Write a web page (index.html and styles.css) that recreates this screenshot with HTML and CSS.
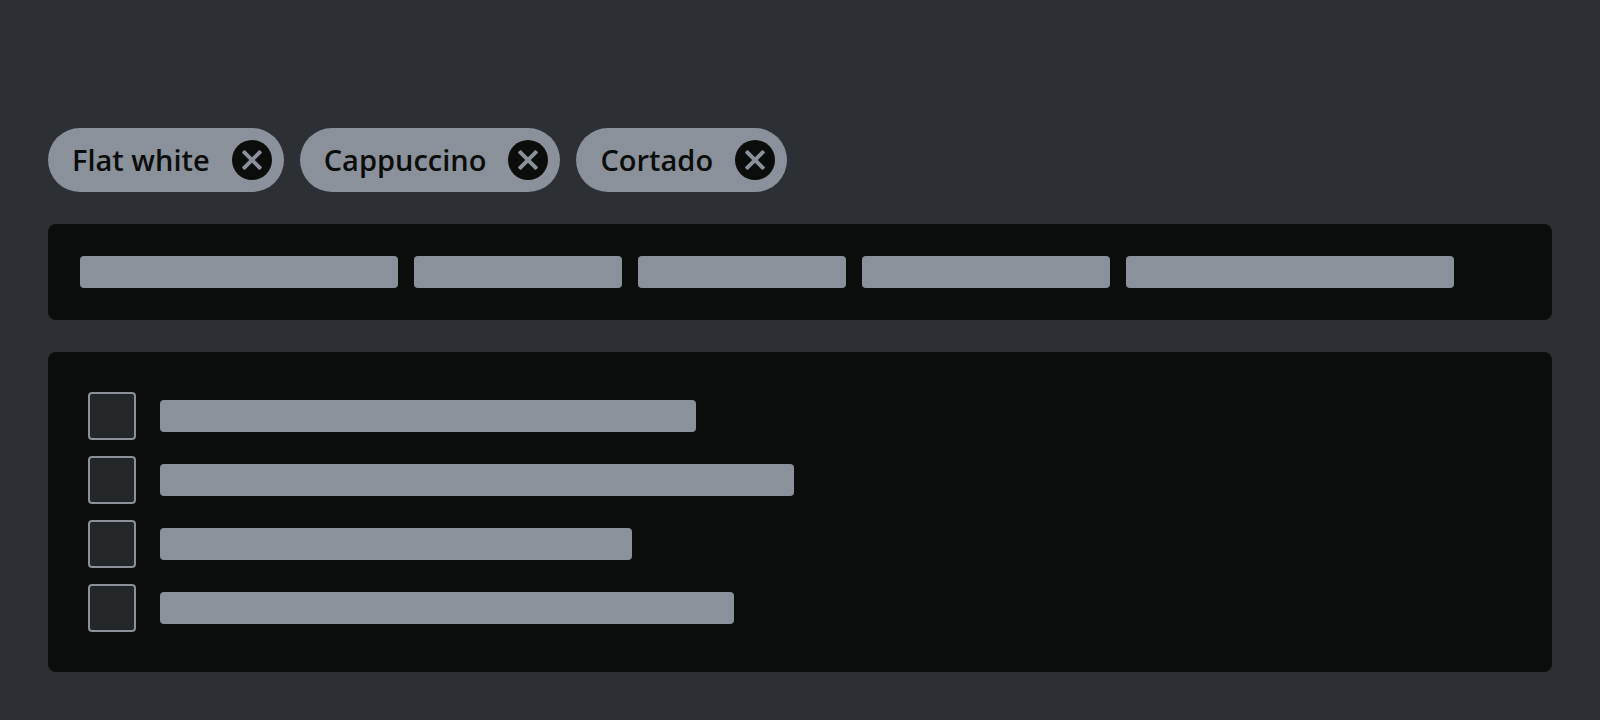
FILE: index.html
```html
<!DOCTYPE html>
<html lang="en">
<head>
<meta charset="utf-8">
<title>Selected filters</title>
<link rel="stylesheet" href="styles.css">
</head>
<body>
<main class="page">
  <ul class="chips">
    <li class="chip"><span class="chip-label">Flat white</span><button class="chip-remove" type="button" aria-label="Remove Flat white"><svg class="chip-icon" viewBox="-10 -10 20 20" aria-hidden="true"><rect x="-12.5" y="-2" width="25" height="4" rx="1" transform="rotate(45)"/><rect x="-12.5" y="-2" width="25" height="4" rx="1" transform="rotate(-45)"/></svg></button></li>
    <li class="chip"><span class="chip-label">Cappuccino</span><button class="chip-remove" type="button" aria-label="Remove Cappuccino"><svg class="chip-icon" viewBox="-10 -10 20 20" aria-hidden="true"><rect x="-12.5" y="-2" width="25" height="4" rx="1" transform="rotate(45)"/><rect x="-12.5" y="-2" width="25" height="4" rx="1" transform="rotate(-45)"/></svg></button></li>
    <li class="chip"><span class="chip-label">Cortado</span><button class="chip-remove" type="button" aria-label="Remove Cortado"><svg class="chip-icon" viewBox="-10 -10 20 20" aria-hidden="true"><rect x="-12.5" y="-2" width="25" height="4" rx="1" transform="rotate(45)"/><rect x="-12.5" y="-2" width="25" height="4" rx="1" transform="rotate(-45)"/></svg></button></li>
  </ul>
  <section class="panel toolbar">
    <span class="bar" style="width:318px"></span>
    <span class="bar" style="width:208px"></span>
    <span class="bar" style="width:208px"></span>
    <span class="bar" style="width:248px"></span>
    <span class="bar" style="width:328px"></span>
  </section>
  <section class="panel options">
    <label class="option"><input class="check" type="checkbox" aria-label="Option 1"><span class="bar" style="width:536px"></span></label>
    <label class="option"><input class="check" type="checkbox" aria-label="Option 2"><span class="bar" style="width:634px"></span></label>
    <label class="option"><input class="check" type="checkbox" aria-label="Option 3"><span class="bar" style="width:472px"></span></label>
    <label class="option"><input class="check" type="checkbox" aria-label="Option 4"><span class="bar" style="width:574px"></span></label>
  </section>
</main>
</body>
</html>
```
FILE: styles.css
```css
* {
  box-sizing: border-box;
}

body {
  margin: 0;
  background: #2c2f34;
  color: #0a0d0b;
  font-family: "Open Sans", "Noto Sans", sans-serif;
}

.page {
  display: flex;
  flex-direction: column;
  gap: 32px;
  padding: 128px 48px 48px;
}

.chips {
  display: flex;
  flex-wrap: wrap;
  gap: 16px;
  margin: 0;
  padding: 0;
  list-style: none;
}

.chip {
  display: flex;
  align-items: center;
  gap: 22px;
  padding: 12px 12px 12px 24px;
  border-radius: 32px;
  background: #8a919b;
}

.chip-label {
  font-size: 29px;
  font-weight: 600;
  line-height: 38px;
}

.chip-remove {
  display: flex;
  align-items: center;
  justify-content: center;
  width: 40px;
  height: 40px;
  padding: 0;
  border: 0;
  border-radius: 50%;
  background: #0a0d0b;
  color: #8a919b;
}

.chip-icon {
  width: 20px;
  height: 20px;
  fill: currentColor;
}

.panel {
  display: flex;
  border-radius: 8px;
  background: #0a0d0b;
}

.toolbar {
  flex-wrap: wrap;
  gap: 16px;
  padding: 32px;
}

.options {
  flex-direction: column;
  gap: 16px;
  padding: 40px;
}

.option {
  display: flex;
  align-items: center;
  gap: 24px;
}

.bar {
  height: 32px;
  border-radius: 4px;
  background: #8a919b;
}

.check {
  flex: none;
  width: 48px;
  height: 48px;
  margin: 0;
  appearance: none;
  border: 2px solid #8a919b;
  border-radius: 4px;
  background: #23272a;
}

.check:checked {
  background: #8a919b;
}
```
